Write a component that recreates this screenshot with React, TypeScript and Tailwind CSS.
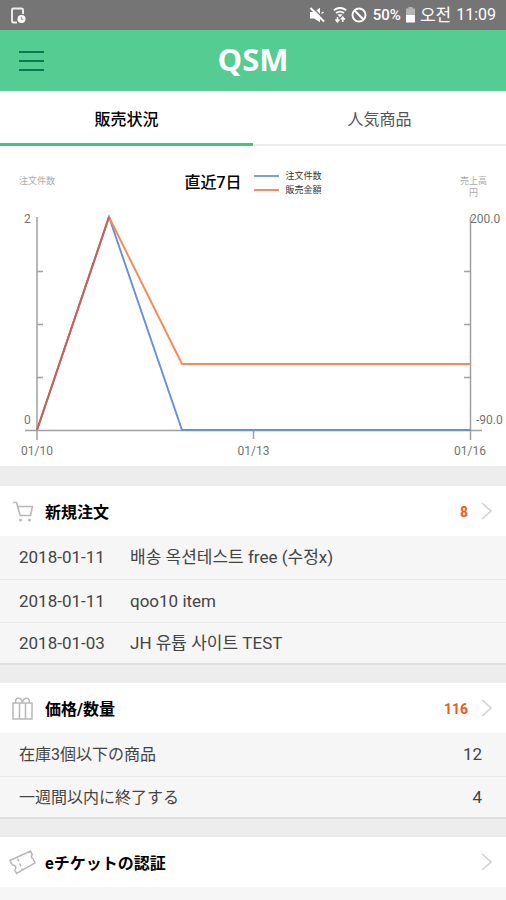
import type { ReactNode } from 'react'

const orders = [
  { date: '2018-01-11', title: '배송 옥션테스트 free (수정x)' },
  { date: '2018-01-11', title: 'qoo10 item' },
  { date: '2018-01-03', title: 'JH 유튭 사이트 TEST' },
]

const stocks = [
  { label: '在庫3個以下の商品', count: 12 },
  { label: '一週間以内に終了する', count: 4 },
]

function StatusBar() {
  return (
    <div className="flex h-[30px] items-center justify-between bg-[#757575] px-[10px] text-white">
      <svg width="16" height="17" viewBox="0 0 16 17" fill="none">
        <path d="M13 7V3a1.500 1.500 0 0 0-1.500-1.500h-8A1.500 1.500 0 0 0 2 3v11a1.500 1.500 0 0 0 1.500 1.500H7" stroke="#f0f0f0" strokeWidth="1.900" />
        <circle cx="11.500" cy="12" r="4" fill="#fff" />
        <path d="M11.300 9.800v2.400h2" stroke="#858585" strokeWidth="1" />
      </svg>
      <div className="flex items-center">
        <svg className="mr-[8px]" width="16" height="16" viewBox="0 0 16 16">
          <path d="M1 5h4L11 .8v14.400L5 11.500H1z" fill="#fff" />
          <path d="M3.500 .5L15.500 12.500" stroke="#757575" strokeWidth="1.500" />
          <path d="M1.500 1L15 14.500" stroke="#fff" strokeWidth="2" />
          <path d="M12.500 6.500l2-1.500" stroke="#fff" strokeWidth="1.500" />
        </svg>
        <svg className="mr-[4px]" width="14" height="16" viewBox="0 0 14 16" fill="none" stroke="#fff">
          <path d="M.8 3.200c3.800-2.800 8.600-2.800 12.400 0M3 6c2.600-1.800 5.400-1.800 8 0" strokeWidth="1.900" />
          <path d="M4.300 7.200h5.400L7 10.200z" fill="#fff" stroke="none" />
          <path d="M4.500 10v4.500M2.500 12.500l2 2.300 2-2.300M9.800 15v-4.500M7.800 12.500l2-2.300 2 2.300" strokeWidth="1.500" />
        </svg>
        <svg className="mr-[6px]" width="16" height="16" viewBox="0 0 16 16" fill="none" stroke="#fff" strokeWidth="2">
          <circle cx="8" cy="8" r="6.500" />
          <path d="M3.300 3.300l9.400 9.400" />
        </svg>
        <span className="text-[15px] leading-[20px] font-medium">50%</span>
        <svg className="mx-[5px]" width="9" height="16" viewBox="0 0 9 16">
          <path d="M2.500 0h4v1.500H9V8H0V1.500h2.500z" fill="#b4b4b4" />
          <path d="M0 8h9v7.500H0z" fill="#fff" />
        </svg>
        <span className="mr-[5px] text-[17px] leading-[20px]">오전</span>
        <span className="text-[16px] leading-[20px]">11:09</span>
      </div>
    </div>
  )
}

function Header() {
  return (
    <header className="grid h-[61px] grid-cols-3 items-center bg-[#55cc91] px-[19px]">
      <button type="button" aria-label="メニュー" className="w-[25px]">
        <svg width="25" height="22" viewBox="0 0 25 22" stroke="#087a55" strokeWidth="2.200">
          <path d="M0 2h25M0 11h25M0 20h25" />
        </svg>
      </button>
      <h1 className="pb-[4px] text-center font-['Open_Sans',sans-serif] text-[31px] leading-[40px] font-bold text-white">QSM</h1>
    </header>
  )
}

function Tabs() {
  return (
    <nav className="grid h-[55px] grid-cols-2 text-[16px]">
      <button type="button" className="border-b-3 border-[#41c483] pt-[5px] font-medium text-black">販売状況</button>
      <button type="button" className="border-b-2 border-[#ebebeb] pt-[5px] text-[#555]">人気商品</button>
    </nav>
  )
}

function SalesChart() {
  return (
    <section className="h-[320px]">
      <div className="flex h-[58px] items-start justify-between px-[19px] pt-[22px]">
        <span className="w-[60px] pt-[7px] text-[9px] leading-[12px] text-[#aaa]">注文件数</span>
        <div className="flex items-center">
          <h2 className="text-[16px] leading-[26px] font-medium text-black">直近7日</h2>
          <div className="ml-[12px] pt-px text-[9px] leading-[14px] text-[#333]">
            <div className="flex items-center gap-[7px]">
              <span className="h-[2px] w-[25px] bg-[#7d9be6]" />
              注文件数
            </div>
            <div className="flex items-center gap-[7px]">
              <span className="h-[2px] w-[25px] bg-[#f58a66]" />
              販売金額
            </div>
          </div>
        </div>
        <span className="flex w-[60px] justify-end pt-[7px] text-center text-[9px] leading-[12px] text-[#aaa]">
          <span>売上高<br />円</span>
        </span>
      </div>
      <svg className="w-full" viewBox="0 0 506 262" fill="none" role="img" aria-label="直近7日">
        <g stroke="#a0a0a0" strokeWidth="1.500">
          <path d="M37 13v223M470.500 13v223M25 226.500h457" />
          <path d="M37 67.500h6M37 120.500h6M37 173.500h6M464 67.500h6M464 120.500h6M464 173.500h6M253.500 226v9" />
        </g>
        <path d="M37 226l72-213 73 213h288.500" stroke="#668fdc" strokeWidth="1.900" />
        <path d="M109 13l73 147h288.500" stroke="#f98a5c" strokeWidth="2" />
        <path d="M37 226l72-213" stroke="#cc6048" strokeWidth="2" />
        <g fill="#747474" fontSize="12">
          <text x="24" y="19">2</text>
          <text x="24" y="220">0</text>
          <text x="470" y="19">200.0</text>
          <text x="476" y="220">-90.0</text>
          <text x="37" y="251" textAnchor="middle">01/10</text>
          <text x="253.500" y="251" textAnchor="middle">01/13</text>
          <text x="470" y="251" textAnchor="middle">01/16</text>
        </g>
      </svg>
    </section>
  )
}

function SectionLink({ icon, title, count }: { icon: ReactNode; title: string; count?: number }) {
  return (
    <a href="#" className="flex h-[50px] items-center bg-white pr-[14px] pl-[9px]">
      <span className="flex w-[27px] justify-center">{icon}</span>
      <span className="ml-[9px] pt-[3px] text-[16px] leading-[24px] font-bold text-black">{title}</span>
      <span className="mr-[13px] ml-auto pt-[2px] text-[14px] leading-[20px] font-bold text-[#f05a22]">{count}</span>
      <svg width="11" height="18" viewBox="0 0 11 18" fill="none" stroke="#d2d2d2" strokeWidth="1.600">
        <path d="M1 1l9 8-9 8" />
      </svg>
    </a>
  )
}

const cartIcon = (
  <svg width="22" height="21" viewBox="0 0 22 21" fill="none" stroke="#b8b8b8" strokeWidth="1.600">
    <path d="M1 1.500h3.500l3.700 13h10.300l2-9H5.700" strokeLinejoin="round" />
    <circle cx="8.500" cy="19" r="1.500" fill="#b8b8b8" stroke="none" />
    <circle cx="17.500" cy="19" r="1.500" fill="#b8b8b8" stroke="none" />
  </svg>
)

const giftIcon = (
  <svg width="21" height="23" viewBox="0 0 21 23" fill="none" stroke="#b8b8b8" strokeWidth="1.500">
    <path d="M1 6h19v16H1zM7.500 6v16M13.500 6v16" />
    <path d="M10.500 6c-.5-3-2.300-4.800-4.300-4.800S2.800 3.500 4 6M10.500 6c.5-3 2.300-4.800 4.300-4.800S18.200 3.500 17 6" />
  </svg>
)

const ticketIcon = (
  <svg width="27" height="25" viewBox="0 0 27 25" fill="none" stroke="#b8b8b8" strokeWidth="1.500">
    <path d="M1 10.500L21.500 1l1.700 3.600a2.500 2.500 0 0 0 .8 4.200l2 4.200L7.500 23.500 5.800 20a2.700 2.700 0 0 0-.8-4.700 2.500 2.500 0 0 1-2.500-1.500z" />
    <path d="M8.500 8.500l1.300 3M10.700 13.500l1.300 3M12.700 18.500l.8 1.800" />
  </svg>
)

export default function App() {
  return (
    <div className="flex min-h-screen flex-col bg-[#ededed] font-[Roboto,'Noto_Sans_CJK_JP',sans-serif]">
      <StatusBar />
      <Header />
      <main className="flex flex-1 flex-col">
        <div className="bg-white">
          <Tabs />
          <SalesChart />
        </div>

        <section className="mt-[20px]">
          <SectionLink icon={cartIcon} title="新規注文" count={8} />
          <table className="w-full border-b-2 border-[#dedede] bg-[#f6f6f6] text-[17px] leading-[24px] text-[#444]">
            <tbody>
              {orders.map((order, i) => (
                <tr key={i} className="h-[43px] border-b border-[#ebebeb] last:h-[42px] last:border-b-0">
                  <td className="w-[130px] pl-[19px]">{order.date}</td>
                  <td>{order.title}</td>
                </tr>
              ))}
            </tbody>
          </table>
        </section>

        <section className="mt-[18px]">
          <SectionLink icon={giftIcon} title="価格/数量" count={116} />
          <table className="w-full border-b-2 border-[#dedede] bg-[#f6f6f6] leading-[24px] text-[#444]">
            <tbody>
              {stocks.map((stock) => (
                <tr key={stock.label} className="h-[43px] border-b border-[#ebebeb] last:h-[42px] last:border-b-0">
                  <td className="pt-[2px] pl-[19px] text-[16px]">{stock.label}</td>
                  <td className="pr-[24px] text-right text-[17px]">{stock.count}</td>
                </tr>
              ))}
            </tbody>
          </table>
        </section>

        <section className="mt-[18px] flex flex-1 flex-col">
          <SectionLink icon={ticketIcon} title="eチケットの認証" />
          <div className="flex-1 bg-[#f6f6f6]" />
        </section>
      </main>
    </div>
  )
}
